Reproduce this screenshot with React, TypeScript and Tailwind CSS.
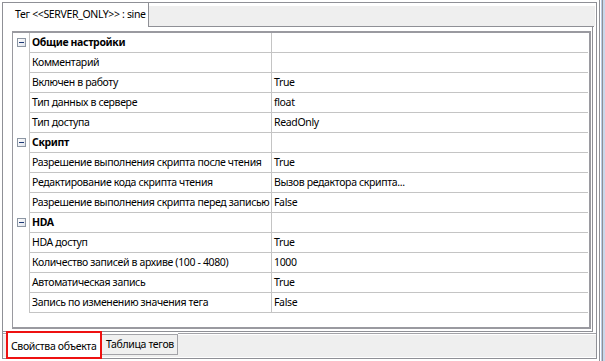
import React from "react";

type Row = { h?: boolean; name: string; value?: string };

const rows: Row[] = [
  { h: true, name: "Общие настройки" },
  { name: "Комментарий", value: "" },
  { name: "Включен в работу", value: "True" },
  { name: "Тип данных в сервере", value: "float" },
  { name: "Тип доступа", value: "ReadOnly" },
  { h: true, name: "Скрипт" },
  { name: "Разрешение выполнения скрипта после чтения", value: "True" },
  { name: "Редактирование кода скрипта чтения", value: "Вызов редактора скрипта..." },
  { name: "Разрешение выполнения скрипта перед записью", value: "False" },
  { h: true, name: "HDA" },
  { name: "HDA доступ", value: "True" },
  { name: "Количество записей в архиве (100 - 4080)", value: "1000" },
  { name: "Автоматическая запись", value: "True" },
  { name: "Запись по изменению значения тега", value: "False" },
];

function MinusBox() {
  return (
    <div className="mt-[5px] ml-[4px] w-[9px] h-[9px] border border-[#8c96a3] bg-gradient-to-br from-white to-[#dfe3ea] flex items-center justify-center">
      <div className="w-[5px] h-[1px] bg-[#1d3a78]" />
    </div>
  );
}

function Band() {
  return (
    <div className="flex flex-col h-full">
      <div className="h-[1px]" />
      <div className="h-[1px] bg-[#a3a3a8]" />
      <div className="h-[1px]" />
      <div className="h-[22px] bg-[#efefef]" />
      <div className="h-[1px]" />
    </div>
  );
}

export default function App() {
  return (
    <div className="w-[605px] h-[361px] bg-white flex relative overflow-hidden font-['Noto_Sans',sans-serif] text-[10.5px] tracking-[-0.35px] text-black leading-none">
      <div className="w-[2px] shrink-0" />
      <div className="mt-[2px] w-[595px] h-[357px] shrink-0 border border-[#8f9096] flex flex-col">
        {/* top tab strip */}
        <div className="h-[24px] flex shrink-0">
          <div className="w-[146px] h-[24px] border-r border-[#8f9096] bg-white pl-[12px] flex items-center pb-[2px]">
            <span className="whitespace-nowrap">Тег &lt;&lt;SERVER_ONLY&gt;&gt; : sine</span>
          </div>
          <div className="flex-1 flex flex-col">
            <div className="h-[3px]" />
            <div className="h-[20px] bg-[#efefef] mr-[1px]" />
            <div className="h-[1px] bg-[#8f9096] mr-[2px]" />
          </div>
        </div>
        {/* panel */}
        <div className="h-[305px] shrink-0 mr-[3px] border-r border-b border-[#8f9096] pt-[4px] pl-[9px] pr-[1px] pb-[2px]">
          <div className="h-full border-l border-t-2 border-r-2 border-b-2 border-[#9a9aa0] bg-white flex flex-col">
            {rows.map((r, i) => (
              <div key={i} className="h-[20px] flex shrink-0">
                <div className="w-[16px] shrink-0">{r.h ? <MinusBox /> : null}</div>
                <div className="flex-1 flex border-l border-b border-[#c4c4c4] mr-[1px]">
                  <div
                    className={
                      "w-[242px] shrink-0 border-r border-[#c4c4c4] pl-[2px] flex items-center whitespace-nowrap overflow-hidden" +
                      (r.h ? " font-bold" : "")
                    }
                  >
                    {r.name}
                  </div>
                  <div className="flex-1 pl-[2px] flex items-center whitespace-nowrap">{r.value}</div>
                </div>
              </div>
            ))}
          </div>
        </div>
        {/* bottom tabs */}
        <div className="h-[26px] shrink-0 flex">
          <div className="w-[5px]">
            <Band />
          </div>
          <div className="w-[94px] h-full bg-white pl-[3px] pt-[9px] whitespace-nowrap">Свойства объекта</div>
          <div className="w-[76px] flex flex-col">
            <div className="h-[2px]" />
            <div className="h-[21px] bg-[#f0f0f0] border-t border-r border-b border-[#a3a3a8] pl-[4px] pt-[4px] whitespace-nowrap">
              Таблица тегов
            </div>
            <div className="flex-1 flex flex-col">
              <div className="h-[2px] bg-[#efefef]" />
            </div>
          </div>
          <div className="flex-1">
            <Band />
          </div>
        </div>
      </div>
      {/* right window edge */}
      <div className="flex h-full shrink-0">
        <div className="w-[2px]" />
        <div className="w-[1px] bg-[#8f9096]" />
        <div className="w-[1px]" />
        <div className="w-[1px] bg-[#b9cbe3]" />
        <div className="w-[1px] bg-[#8f9096]" />
        <div className="w-[2px] bg-[#c9d7ea]" />
      </div>
      {/* red annotation */}
      <div className="absolute left-[6px] top-[331px] w-[96px] h-[28px] border-2 border-[#ee1111]" />
    </div>
  );
}
